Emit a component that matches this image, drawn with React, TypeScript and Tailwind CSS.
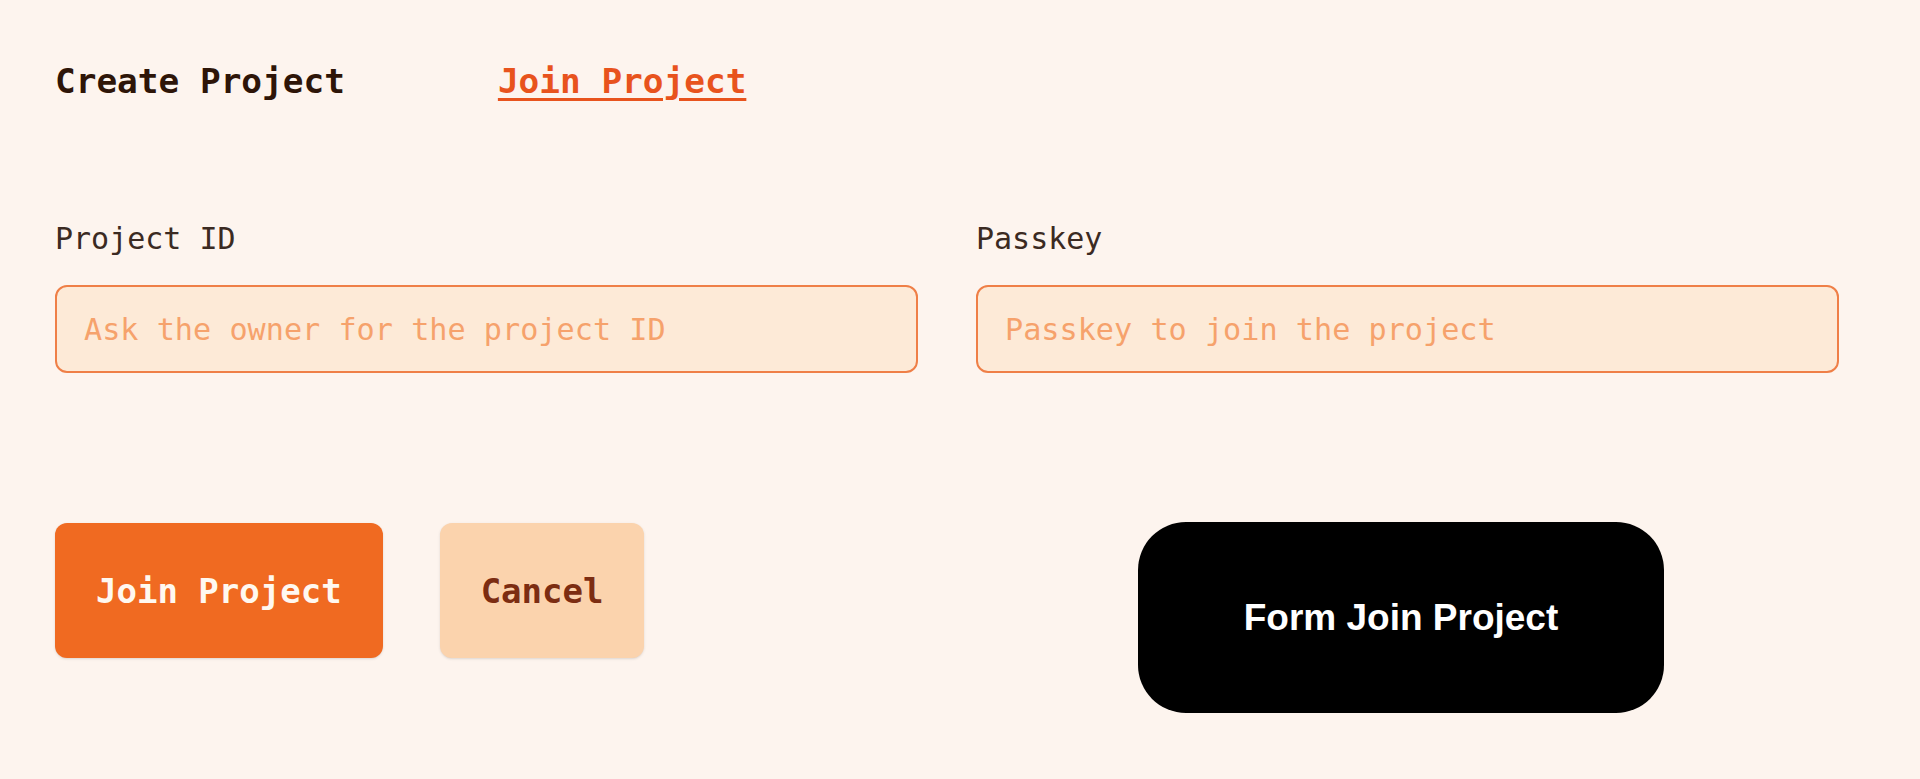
import { useState } from "react";

type Tab = "create" | "join";

export default function App() {
  const [tab, setTab] = useState<Tab>("join");
  const [projectId, setProjectId] = useState("");
  const [passkey, setPasskey] = useState("");

  return (
    <main className="min-h-screen bg-[#fdf4ee] pl-[55px] pr-[81px] pt-[61px] font-['DejaVu_Sans_Mono',monospace]">
      {/* tabs */}
      <div className="flex gap-[153px] text-[34.4px] font-bold leading-[40px]">
        <button
          onClick={() => setTab("create")}
          className={tab === "create" ? "text-[#e8531d] underline decoration-[3px] underline-offset-[5px]" : "text-[#2e1508]"}
        >
          Create Project
        </button>
        <button
          onClick={() => setTab("join")}
          className={tab === "join" ? "text-[#e8531d] underline decoration-[3px] underline-offset-[5px]" : "text-[#2e1508]"}
        >
          Join Project
        </button>
      </div>

      {/* fields */}
      <div className="mt-[120px] grid grid-cols-2 gap-x-[58px]">
        <label className="block">
          <span className="block text-[30px] leading-[36px] text-[#3b2a22]">Project ID</span>
          <input
            value={projectId}
            onChange={(e) => setProjectId(e.target.value)}
            placeholder="Ask the owner for the project ID"
            className="mt-[28px] h-[88px] w-full rounded-[12px] border-2 border-[#ef7f47] bg-[#fdead7] px-[27px] text-[30.2px] text-[#3b2a22] outline-none placeholder:text-[#f6a26c]"
          />
        </label>
        <label className="block">
          <span className="block text-[30px] leading-[36px] text-[#3b2a22]">Passkey</span>
          <input
            value={passkey}
            onChange={(e) => setPasskey(e.target.value)}
            placeholder="Passkey to join the project"
            className="mt-[28px] h-[88px] w-full rounded-[12px] border-2 border-[#ef7f47] bg-[#fdead7] px-[27px] text-[30.2px] text-[#3b2a22] outline-none placeholder:text-[#f6a26c]"
          />
        </label>
      </div>

      {/* actions */}
      <div className="mt-[149px] grid grid-cols-2 gap-x-[58px]">
        <div className="flex items-start gap-[57px] pt-px">
          <button className="h-[135px] rounded-[12px] bg-[#f06a21] px-[41px] text-[34px] font-bold leading-[40px] text-[#fff8f0] shadow-sm">
            Join Project
          </button>
          <button
            onClick={() => {
              setProjectId("");
              setPasskey("");
            }}
            className="h-[135px] rounded-[12px] bg-[#fbd3ad] px-[41px] text-[34px] font-bold leading-[40px] text-[#7c2d12] shadow-sm"
          >
            Cancel
          </button>
        </div>
        <div className="pl-[162px]">
          <div className="flex h-[191px] w-[526px] items-center justify-center rounded-[48px] bg-black font-['Liberation_Sans',Arial,sans-serif] text-[37px] font-bold text-white">
            Form Join Project
          </div>
        </div>
      </div>
    </main>
  );
}
